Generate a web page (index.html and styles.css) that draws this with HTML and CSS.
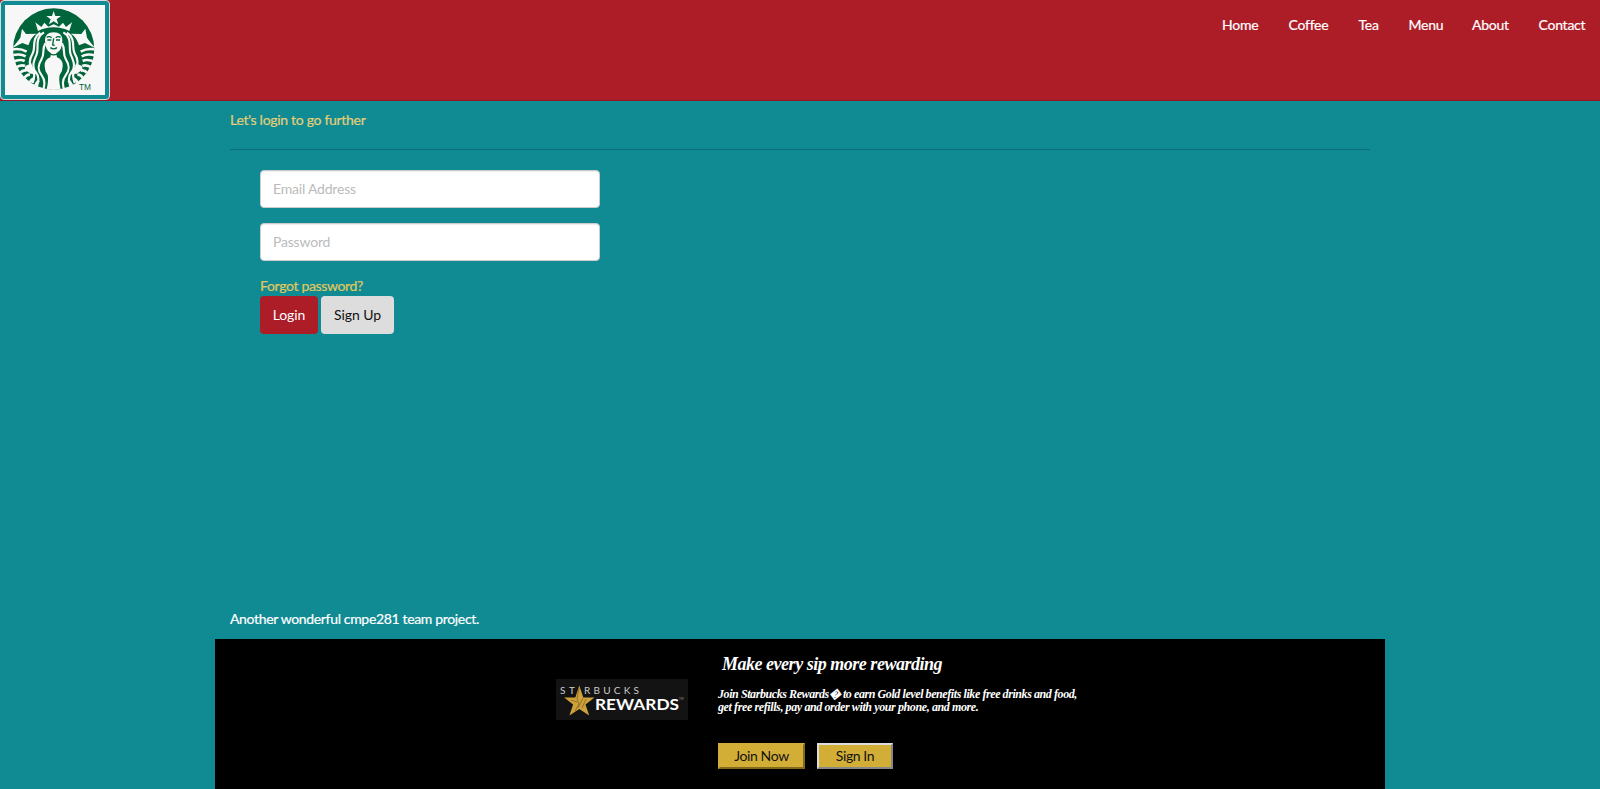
FILE: index.html
```html
<!DOCTYPE html>
<html lang="en">
<head>
<meta charset="utf-8">
<title>Login</title>
<link rel="stylesheet" href="styles.css">
</head>
<body>
<header class="navbar">
  <a class="brand">
    <svg class="siren" viewBox="15 15 300 270" preserveAspectRatio="none">
      <defs><clipPath id="disc"><circle cx="161" cy="147" r="123"/></clipPath></defs>
      <circle cx="161" cy="147" r="122" fill="#00653b"/>
      <g clip-path="url(#disc)">
        <path fill="#f7f7f7" d="M161 33l5 15h17l-13 10 5 15-14-9-14 9 5-15-13-10h17z"/>
        <path fill="#f7f7f7" d="M106 67l18 14 9-13 12 12 16-7 16 7 12-12 9 13 18-14-8 26q-22-11-47-11t-47 11z"/>
        <path fill="#f7f7f7" d="M66 86l12 16 32-1q-15 9-20 23l-5 12-18-7-32 16q18-20 26-32zM256 86l-12 16-32-1q15 9 20 23l5 12 18-7 32 16q-18-20-26-32z"/>
        <g fill="none" stroke="#f7f7f7" stroke-width="8">
          <path d="M34 149q25-6 46 6M34 167q26-8 43 2M38 185q23-9 36-2M47 203q16-11 28-5M58 220q12-12 22-8M72 236q7-13 18-12M89 249q5-12 14-14M105 262q3-14 12-20"/>
          <path d="M288 149q-25-6-46 6M288 167q-26-8-43 2M284 185q-23-9-36-2M275 203q-16-11-28-5M264 220q-12-12-22-8M250 236q-7-13-18-12M233 249q-5-12-14-14M217 262q-3-14-12-20"/>
        </g>
        <path fill="#f7f7f7" d="M76 198l18-8q4 15 11 32l-13-1-18-12zM246 198l-18-8q-4 15-11 32l13-1 18-12z"/>
        <path fill="#f7f7f7" d="M161 97q26 0 26 24 0 30-18 39l2 12q17 6 17 24 1 16-9 29-4 20 5 50h-46q9-30 5-50-10-13-9-29 0-18 17-24l2-12q-18-9-18-39 0-24 26-24z"/>
        <g fill="none" stroke="#f7f7f7" stroke-width="6.500">
          <path d="M132 97c-30 17-14 48-22 66s-16 37-3 53 8 28 2 50M121 98c-28 18-13 45-23 62s-13 32-2 47 6 26 2 42M136 130c-12 20 0 30-12 49s-11 32 1 47 9 29 3 50M190 97c30 17 14 48 22 66s16 37 3 53-8 28-2 50M201 98c28 18 13 45 23 62s13 32 2 47-6 26-2 42M186 130c12 20 0 30 12 49s11 32-1 47-9 29-3 50"/>
        </g>
        <path fill="none" stroke="#00653b" stroke-width="4" d="M140 112q8-5 15 1M167 113q8-6 15-1M142 120h12M168 120h12M161 115l-3 20 6 1M151 143q10 7 20 0M143 158q18 13 36 0"/>
      </g>
      <text x="237" y="269" class="tm">TM</text>
    </svg>
  </a>
  <nav class="menu">
    <a class="w67">Home</a><a class="w70">Coffee</a><a class="w50">Tea</a><a class="w63">Menu</a><a class="w67">About</a><a class="w76">Contact</a>
  </nav>
</header>
<main class="container">
  <p class="lead">Let's login to go further</p>
  <hr>
  <form class="login">
    <input type="text" placeholder="Email Address">
    <input type="password" placeholder="Password">
    <a class="forgot">Forgot password?</a>
    <div class="actions"><button type="button" class="btn primary">Login</button><button type="button" class="btn plain">Sign Up</button></div>
  </form>
  <p class="credit">Another wonderful cmpe281 team project.</p>
</main>
<footer class="rewards">
  <svg class="card" viewBox="0 0 132 41">
    <rect width="132" height="41" fill="#131313"/>
    <text x="4" y="15" class="s1" textLength="15">ST</text>
    <text x="28" y="15" class="s1" textLength="55">RBUCKS</text>
    <text x="39" y="30.5" class="s2" textLength="84" lengthAdjust="spacingAndGlyphs">REWARDS</text>
    <text x="123" y="21" class="s3">TM</text>
    <path fill="#cda13b" d="M23.3 6.500l4 12h11.200l-9 7 3.700 11-9.900-6.500-9.900 6.500 3.700-11-9-7h11.200z"/>
    <path d="M23 9l-2 11 2 5-4 7M27 19l-5 10M30 20l-4 9M15 21l6 2" stroke="#7b5b1d" stroke-width=".7" fill="none"/>
  </svg>
  <div class="pitch">
    <h2>Make every sip more rewarding</h2>
    <p><span class="l1">Join Starbucks Rewards&#xFFFD; to earn Gold level benefits like free drinks and food,</span><br><span class="l2">get free refills, pay and order with your phone, and more.</span></p>
    <div class="choices"><button type="button" class="gold join">Join Now</button><button type="button" class="gold sign">Sign In</button></div>
  </div>
</footer>
</body>
</html>
```
FILE: styles.css
```css
* { box-sizing: border-box; }
html { overflow: hidden; }
body { margin: 0; height: 789px; overflow: hidden; display: flex; flex-direction: column; background: #108a93; color: #fff; font: 14px/20px Lato, "Open Sans", sans-serif; }
p, h2 { margin: 0; }
.navbar { height: 101px; flex: none; display: flex; justify-content: space-between; background: #ad1d28; border-bottom: 1px solid #911821; }
.brand { width: 110px; height: 100px; padding: 4px; border: 1px solid #ddd; border-radius: 4px; background: #108a93; }
.siren { display: block; width: 100px; height: 90px; background: #f7f7f7; }
.tm { font: 25px "Liberation Sans", sans-serif; fill: #00653b; }
.menu { display: flex; padding-top: 15px; letter-spacing: -.25px; }
.menu, .lead, .forgot, .credit { -webkit-text-stroke: .2px currentColor; }
.w67 { width: 66.500px; }
.w70 { width: 70px; }
.w50 { width: 50px; }
.w63 { width: 63.500px; }
.w76 { width: 61.500px; }
.container { width: 1170px; height: 538px; flex: none; margin: 0 auto; padding: 9px 15px 0; display: flex; flex-direction: column; }
.lead { color: #e5cf78; letter-spacing: -.3px; }
hr { width: 100%; margin: 19px 0 20px; border: 0; border-top: 1px solid #0b7078; }
.login { width: 340px; margin-left: 30px; display: flex; flex-direction: column; }
input { height: 38px; margin-bottom: 15px; padding: 0 12px 2px; border: 1px solid #ccc; border-radius: 4px; background: #fff; box-shadow: inset 0 1px 1px rgba(0,0,0,.075); font: inherit; letter-spacing: -.2px; }
input::placeholder { color: #bbb; opacity: 1; }
.forgot { color: #e0c95c; letter-spacing: -.34px; }
.actions { display: flex; gap: 3px; }
.btn { height: 38px; padding: 0; border: 0; border-radius: 4px; font: inherit; letter-spacing: -.1px; }
.primary { width: 58px; background: #ad1d28; color: #fff; }
.plain { width: 73px; background: #ddd; color: #111; }
.credit { margin-top: auto; margin-bottom: 10px; letter-spacing: -.34px; }
.rewards { width: 1170px; height: 150px; flex: none; margin: 0 auto; display: flex; background: #000; }
.card { width: 132px; height: 41px; margin: 40px 30px 0 341px; }
.s1 { font: 10px Lato, sans-serif; fill: #ccc; }
.s2 { font: bold 15px Lato, sans-serif; fill: #fff; }
.s3 { font: 3px Lato, sans-serif; fill: #999; }
.pitch { padding-top: 14px; }
h2 { padding-left: 4px; font: italic bold 18px/22px "Liberation Serif", serif; letter-spacing: -.48px; white-space: nowrap; }
.pitch p { margin-top: 13px; font: italic bold 12px/13px "Liberation Serif", serif; white-space: nowrap; }
.l1 { letter-spacing: -.42px; }
.l2 { letter-spacing: -.39px; }
.choices { display: flex; gap: 12px; margin-top: 29px; }
.gold { height: 26px; padding: 0; background: #d3ae36; color: #111; font: 14px/20px Lato, sans-serif; letter-spacing: -.4px; }
.join { width: 87px; border: 2px solid; border-color: #d3ae36 #83691b #83691b #d3ae36; }
.sign { width: 76px; border: 2px solid; border-color: #ddd #888 #888 #ddd; }
```
